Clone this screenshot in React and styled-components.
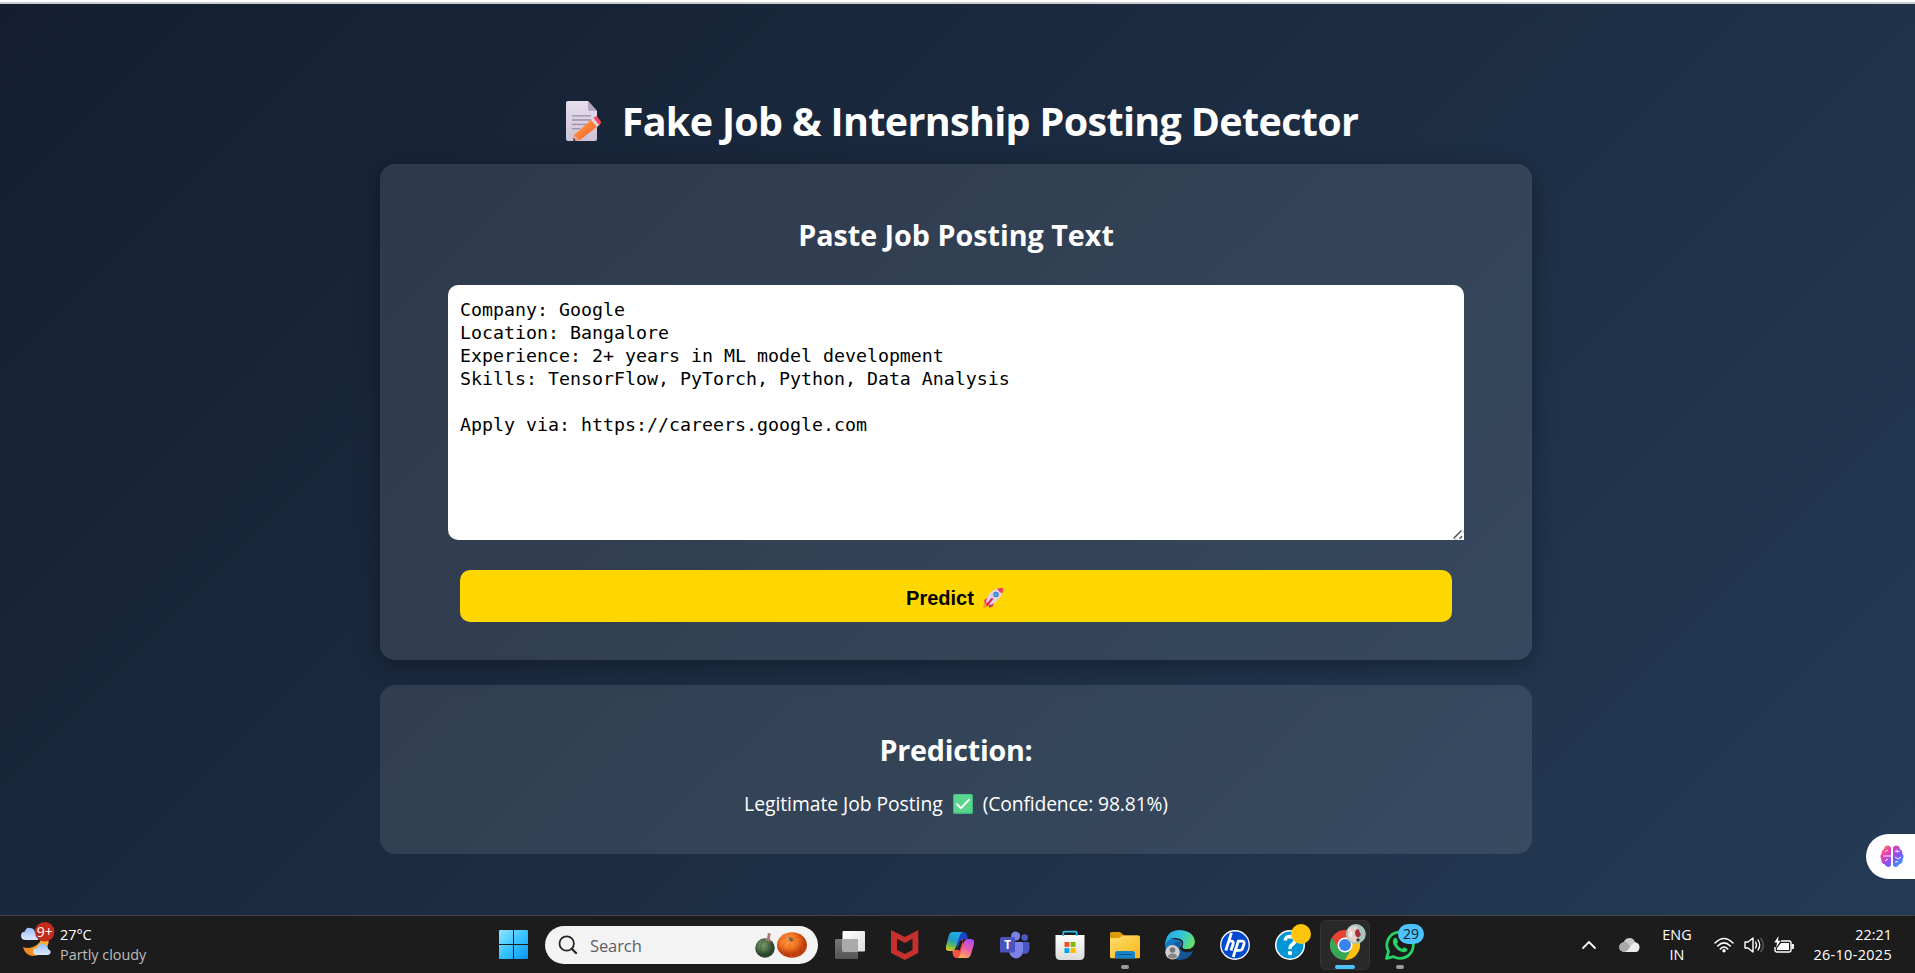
import React from "react";
import styled, { createGlobalStyle, css } from "styled-components";

const GlobalStyle = createGlobalStyle`
  *, *::before, *::after { box-sizing: border-box; }
  html, body { margin: 0; padding: 0; height: 100%; overflow: hidden; }
  body { font-family: "Segoe UI", "Open Sans", "Noto Sans", sans-serif; }
  svg { display: block; flex: none; }
`;

const Screen = styled.div`
  position: relative;
  display: flex;
  flex-direction: column;
  width: 1915px;
  height: 973px;
  overflow: hidden;
`;

const BrowserEdge = styled.div`
  height: 4px;
  flex: none;
  background: #ffffff;
  border-bottom: 2px solid #cbcbcb;
`;

const Page = styled.main`
  flex: 1;
  display: flex;
  flex-direction: column;
  align-items: center;
  padding: 90px 3px 0 0;
  color: #ffffff;
  background: linear-gradient(135deg, #141e30, #243b55);
`;

const Title = styled.h1`
  display: flex;
  align-items: center;
  gap: 20px;
  height: 54px;
  margin: 0 0 16px 12px;
  font-size: 39.5px;
  font-weight: 700;
  line-height: 54px;
  letter-spacing: ${(p) => p.$spacing}px;
  white-space: nowrap;
`;

const Card = styled.section`
  display: flex;
  flex-direction: column;
  align-items: center;
  width: 1152px;
  height: ${(p) => p.$height}px;
  padding-top: ${(p) => p.$top}px;
  border-radius: 15px;
  background: rgba(255, 255, 255, 0.1);
  ${(p) => p.$raised && css`
    margin-bottom: 25px;
    box-shadow: 0 5px 25px rgba(0, 0, 0, 0.3);
  `}
`;

const CardTitle = styled.h2`
  margin: 0;
  height: 40px;
  font-size: 28.7px;
  font-weight: 700;
  line-height: 40px;
  letter-spacing: ${(p) => p.$spacing}px;
  white-space: nowrap;
`;

const PostingField = styled.div`
  position: relative;
  width: 1016px;
  height: 255px;
  margin: 30px 0;
`;

const PostingInput = styled.textarea`
  display: block;
  width: 100%;
  height: 100%;
  padding: 13px 12px;
  border: 0;
  border-radius: 10px;
  outline: none;
  resize: none;
  color: #000000;
  background: #ffffff;
  font-family: Consolas, "DejaVu Sans Mono", monospace;
  font-size: 18.27px;
  line-height: 23px;
`;

const ResizeGrip = styled.svg`
  position: absolute;
  right: 0;
  bottom: 0;
`;

const PredictButton = styled.button`
  display: flex;
  align-items: center;
  justify-content: center;
  gap: 9px;
  width: 992px;
  height: 52px;
  padding: 3px 3px 0 0;
  border: 0;
  border-radius: 10px;
  color: #000000;
  background: #ffd700;
  font: 700 20px/24px "Liberation Sans", Arial, sans-serif;
`;

const Result = styled.p`
  display: flex;
  align-items: center;
  gap: 10px;
  height: 28px;
  margin: 20px 0 0;
  font-size: 19.3px;
  line-height: 28px;
  white-space: nowrap;
`;

const ResultText = styled.span`
  letter-spacing: ${(p) => p.$spacing}px;
`;

const Assistant = styled.div`
  position: absolute;
  top: 834px;
  right: 0;
  display: flex;
  align-items: center;
  width: 49px;
  height: 45px;
  padding-left: 14px;
  border-radius: 23px 0 0 23px;
  background: #ffffff;
`;

const Taskbar = styled.footer`
  display: flex;
  align-items: stretch;
  height: 58px;
  flex: none;
  border-top: 1px solid #454545;
  background: #1c1c1c;
  color: #ffffff;
  font-size: 14.4px;
  line-height: 20px;
`;

const Weather = styled.div`
  display: flex;
  gap: 5px;
  width: 486px;
  padding: 6px 0 0 20px;
`;

const Lines = styled.div`
  display: flex;
  flex-direction: column;
  width: ${(p) => p.$width || "auto"};
  padding-top: ${(p) => p.$top || 0}px;
  text-align: ${(p) => p.$align || "left"};
  white-space: nowrap;
`;

const Line = styled.span`
  letter-spacing: ${(p) => p.$spacing || 0}px;
  color: ${(p) => (p.$muted ? "#bdbdbd" : "#ffffff")};
`;

const AppSlot = styled.div`
  position: relative;
  display: flex;
  align-items: center;
  justify-content: center;
  width: 55px;
`;

const ActiveTile = styled.div`
  display: flex;
  align-items: center;
  justify-content: center;
  width: 50px;
  height: 50px;
  border: 1px solid #343434;
  border-radius: 6px;
  background: #292929;
`;

const Indicator = styled.i`
  position: absolute;
  bottom: 4px;
  left: 50%;
  width: ${(p) => (p.$active ? 20 : 8)}px;
  height: 4px;
  border-radius: 2px;
  transform: translateX(-50%);
  background: ${(p) => (p.$active ? "#4cc2ff" : "#9a9a9a")};
`;

const Badge = styled.span`
  position: absolute;
  top: 8px;
  left: ${(p) => p.$left}px;
  display: flex;
  align-items: center;
  justify-content: center;
  width: ${(p) => p.$width}px;
  height: 20px;
  border-radius: 10px;
  background: ${(p) => p.$color};
  color: #10202c;
  font-size: 14px;
  line-height: 20px;
`;

const SearchBox = styled.div`
  display: flex;
  align-items: center;
  width: 273px;
  height: 38px;
  margin: 10px 4.5px 0 4px;
  padding: 0 11px 0 13px;
  border-radius: 19px;
  background: #f3f3f3;
  color: #606060;
  font-size: 16.5px;
`;

const SearchLabel = styled.span`
  flex: 1;
  margin-left: 12px;
  padding-top: 1px;
  letter-spacing: -0.1px;
`;

const Tray = styled.div`
  display: flex;
  align-items: center;
  margin-left: auto;
  padding-right: 23px;
`;

const TrayItem = styled.div`
  display: flex;
  justify-content: center;
  width: ${(p) => p.$width}px;
  margin-left: ${(p) => p.$gap || 0}px;
`;

const MemoIcon = () => (
  <svg width="36" height="40" viewBox="0 0 36 40">
    <defs>
      <linearGradient id="paper" x1="0" y1="0" x2="0" y2="1"><stop stopColor="#e6dfec" /><stop offset="1" stopColor="#cdc2d6" /></linearGradient>
      <linearGradient id="pencil" x1="0" y1="0" x2="1" y2="1"><stop stopColor="#ffa544" /><stop offset="1" stopColor="#f4592f" /></linearGradient>
    </defs>
    <path d="M2 0H22L31 10V38Q31 40 29 40H2Q0 40 0 38V2Q0 0 2 0Z" fill="url(#paper)" />
    <path d="M22 0L31 10H23Q22 10 22 9Z" fill="#b5a7c0" />
    <path d="M6 14.8H25M6 19H25M6 23.4H22M6 27.7H14" stroke="#9b8ca8" strokeWidth="1.3" />
    <path d="M8 34L26 18L32 25L14 39L7 40Z" fill="url(#pencil)" />
    <path d="M8 34L14 39L7 40Z" fill="#e8a08a" /><path d="M7.5 37L10 39.4L7 40Z" fill="#583143" />
    <path d="M25 19L28 16.5L34 23.5L31 26Z" fill="#e8d4e0" />
    <path d="M27.5 17L29.5 15.5Q30.5 15 31.5 16L34.8 20.5Q35.5 21.7 34.5 22.7L33 24Z" fill="#f4475f" />
  </svg>
);

const RocketIcon = () => (
  <svg width="20" height="20" viewBox="0 0 20 20">
    <path d="M0 20Q0 14 4 15L6 17Q5 20 0 20Z" fill="#ff9f2e" />
    <path d="M6 9L1 12L2 16L6 14Z" fill="#f23d68" /><path d="M11 13L10 18L6 20L6 15Z" fill="#d72e62" />
    <path d="M3 14Q5 4 13 1Q17 0 20 0Q20 5 18 8Q13 15 7 17Z" fill="#dfd4e7" />
    <path d="M14 .8Q18-.2 20 0Q20.2 3 19.2 5.5Q16 4 14 .8Z" fill="#f33b55" />
    <circle cx="13" cy="6.4" r="2.7" fill="#576a93" /><circle cx="13" cy="6.4" r="1.9" fill="#3eaaf0" />
    <path d="M4 17L9 11" stroke="#d83062" strokeWidth="2.2" strokeLinecap="round" />
  </svg>
);

const CheckIcon = () => (
  <svg width="20" height="20" viewBox="0 0 20 20">
    <rect width="20" height="20" rx="1.5" fill="#42b878" /><rect x="1" y=".5" width="18" height="18" rx="1.5" fill="#5ad58d" />
    <path d="M4 10.3L8 14.2L16 5.6" fill="none" stroke="#fff" strokeWidth="1.9" strokeLinecap="round" strokeLinejoin="round" />
  </svg>
);

const BrainIcon = () => (
  <svg width="24" height="23" viewBox="0 0 24 23">
    <defs><linearGradient id="brain" x1="0" y1="0" x2="1" y2="1"><stop stopColor="#ff912e" /><stop offset=".28" stopColor="#f23da9" /><stop offset=".58" stopColor="#8650f4" /><stop offset="1" stopColor="#20b5ff" /></linearGradient></defs>
    <path d="M11 2.5Q9-.3 6 1Q4 2 4.2 4Q1.4 5 1.6 8.4Q-.5 11 1.2 14Q1 18.6 4.7 19.2Q6.3 23 9.5 21.8L11 20.5ZM13 2.5Q15-.3 18 1Q20 2 19.8 4Q22.6 5 22.4 8.4Q24.5 11 22.8 14Q23 18.6 19.3 19.2Q17.7 23 14.5 21.8L13 20.5Z" fill="url(#brain)" />
    <path d="M3 11H11M5 7L8 5M5 16L8 14M15 6L17 7V4.5M17 7L20 6M15 12L18 14L21 12M15 17L18 16.5" fill="none" stroke="#fff" strokeWidth=".9" />
  </svg>
);

const WeatherIcon = () => (
  <svg width="35" height="38" viewBox="0 0 35 38">
    <defs>
      <linearGradient id="cloud" x1="0" y1="0" x2="0" y2="1"><stop stopColor="#9abef7" /><stop offset="1" stopColor="#dce9ff" /></linearGradient>
      <linearGradient id="moon" x1="1" y1="0" x2="0" y2="1"><stop stopColor="#ffca28" /><stop offset="1" stopColor="#f07a1d" /></linearGradient>
    </defs>
    <path d="M6 18Q1 18 1 13.5Q1 10 5 9.5Q6 5 10 6Q14 6 15 10Q19 11 18 15V18Z" fill="url(#cloud)" />
    <path d="M23 10Q32 17 27 25Q22 34 12 34Q5 33 3 25Q7 27 13 25Q22 22 23 10Z" fill="url(#moon)" />
    <path d="M17 33Q13 33 13 29.5Q13 26 17 26Q19 20 24 22Q28 23 28 27Q31 28 30.5 31Q30 33 27 33Z" fill="url(#cloud)" />
    <circle cx="24.7" cy="9.8" r="9.8" fill="#c42b1c" />
    <text x="24.8" y="15" textAnchor="middle" fontFamily="Open Sans" fontSize="14" fill="#fff">9+</text>
  </svg>
);

const StartIcon = () => (
  <svg width="29" height="29" viewBox="0 0 29 29">
    <defs><linearGradient id="win" x1="0" y1="0" x2="29" y2="29" gradientUnits="userSpaceOnUse"><stop stopColor="#91e5ff" /><stop offset=".5" stopColor="#38c3ff" /><stop offset="1" stopColor="#0795f8" /></linearGradient></defs>
    <path d="M1 0H14V14H0V1Q0 0 1 0ZM15 0H28Q29 0 29 1V14H15ZM0 15H14V29H1Q0 29 0 28ZM15 15H29V28Q29 29 28 29H15Z" fill="url(#win)" />
  </svg>
);

const SearchIcon = () => (
  <svg width="20" height="20" viewBox="0 0 20 20">
    <circle cx="8.7" cy="8.5" r="7.2" fill="none" stroke="#262626" strokeWidth="1.8" />
    <path d="M13.8 13.8L18 18" stroke="#262626" strokeWidth="2.3" strokeLinecap="round" />
  </svg>
);

const PumpkinsIcon = () => (
  <svg width="52" height="27" viewBox="0 0 52 27">
    <defs>
      <radialGradient id="green" cx=".4" cy=".35"><stop stopColor="#7b9970" /><stop offset=".6" stopColor="#4e7247" /><stop offset="1" stopColor="#28432b" /></radialGradient>
      <radialGradient id="orange" cx=".4" cy=".35"><stop stopColor="#ffa34c" /><stop offset=".6" stopColor="#f17420" /><stop offset="1" stopColor="#bc3e0d" /></radialGradient>
    </defs>
    <ellipse cx="10" cy="16" rx="9.8" ry="9.7" fill="url(#green)" />
    <path d="M10 8Q2 14 8 25M12 8Q16 16 12 25M13 8Q20 14 16 24" fill="none" stroke="#34553a" strokeWidth=".5" />
    <path d="M10 9Q13 6 12.7 1L15.8 1.6Q14 7 16 10.5L12 9Z" fill="#a87868" />
    <ellipse cx="37" cy="13" rx="15" ry="12.7" fill="url(#orange)" />
    <path d="M35 8Q24 11 29 23M36 8Q33 15 37 25M37 8Q44 14 42 24M38 8Q49 9 48 19M34 7Q26 4 23 11M38 6Q45 3 50 10" fill="none" stroke="#d85c1b" strokeWidth=".6" />
    <path d="M31 5.5Q35 4 38.5 7L37 10L34 8Z" fill="#8a5b38" /><path d="M31 5L34.5 6L33 8.5Z" fill="#cbb699" />
  </svg>
);

const TaskViewIcon = () => (
  <svg width="30" height="30" viewBox="0 0 30 30">
    <defs>
      <linearGradient id="tvFront" x1="0" y1="0" x2="1" y2="1"><stop stopColor="#fff" /><stop offset="1" stopColor="#dcdcdc" /></linearGradient>
      <linearGradient id="tvBack" x1="0" y1="0" x2="0" y2="1"><stop stopColor="#777" /><stop offset="1" stopColor="#555" /></linearGradient>
    </defs>
    <rect y="9" width="23" height="20" rx="1" fill="url(#tvBack)" /><rect x="7.5" y="1" width="22.5" height="20.5" rx="1" fill="url(#tvFront)" />
    <path d="M7.5 9H23V21.5H7.5Z" fill="#aaa" />
  </svg>
);

const McAfeeIcon = () => (
  <svg width="28" height="30" viewBox="0 0 28 30">
    <path d="M0 0L14 7L27.3 0V23L14 30L0 23Z" fill="#c5302c" /><path d="M6 8.8L14 13L21.5 8.8V20L14 24L6 20Z" fill="#1c1c1c" />
  </svg>
);

const CopilotIcon = () => (
  <svg width="28" height="26" viewBox="0 0 28 26">
    <defs>
      <linearGradient id="cpA" x1=".5" y1="0" x2=".2" y2="1"><stop stopColor="#20b1ed" /><stop offset=".4" stopColor="#2099c9" /><stop offset=".72" stopColor="#61bd54" /><stop offset="1" stopColor="#f3c521" /></linearGradient>
      <linearGradient id="cpB" x1=".7" y1="0" x2=".3" y2="1"><stop stopColor="#a84cf2" /><stop offset=".5" stopColor="#ed5caa" /><stop offset="1" stopColor="#ffae5b" /></linearGradient>
    </defs>
    <path d="M13 0H17Q20 0 21 3L22 7H19Q16 7 15 10L12 18L9 8Z" fill="#1745c8" />
    <path d="M15 26H11Q8 26 7 23L6 18H10Q12 18 13 15L16 6L19 17Z" fill="#ef5443" />
    <path d="M7 0H17Q15 0 14 3L10 15Q9 19 5 19H3Q-1 19 0 14L3 3Q4 0 7 0Z" fill="url(#cpA)" />
    <path d="M21 26H11Q13 26 14 23L18 10Q19 7 22 7H25Q29 7 28 12L25 22Q24 26 21 26Z" fill="url(#cpB)" />
    <path d="M15.7 8.5L12.4 18.2" stroke="#1c1c1c" strokeWidth="2.6" />
  </svg>
);

const TeamsIcon = () => (
  <svg width="30" height="28" viewBox="0 0 30 28">
    <circle cx="24.7" cy="6.5" r="3.2" fill="#5059c9" /><path d="M20 11H28Q29.5 11 29.5 12.5V18Q29 23 24 23Q21 23 20 19Z" fill="#4d55c2" />
    <circle cx="15.6" cy="5" r="4.5" fill="#7b83eb" /><path d="M9 11H21Q23 11 23 13V20Q22.5 27 16 27.5Q10 27 9 20Z" fill="#7b83eb" />
    <rect y="6" width="15" height="15.5" rx="1.5" fill="#4b53bc" />
    <text x="7.5" y="17.5" textAnchor="middle" fontFamily="Open Sans" fontWeight="700" fontSize="11.5" fill="#fff">T</text>
  </svg>
);

const StoreIcon = () => (
  <svg width="30" height="30" viewBox="0 0 30 30">
    <defs><linearGradient id="bag" x1="0" y1="0" x2="0" y2="1"><stop stopColor="#fff" /><stop offset="1" stopColor="#dadada" /></linearGradient></defs>
    <path d="M.5 5H29.5V25Q29.5 30 25 30H5Q.5 30 .5 25Z" fill="url(#bag)" />
    <path d="M8.3 6V2.8Q8.3 1.7 9.4 1.7H20.6Q21.7 1.7 21.7 2.8V6" fill="none" stroke="#31bcec" strokeWidth="1.7" />
    <path d="M9.5 12H14.4V16.9H9.5Z" fill="#f25022" /><path d="M15.6 12H20.5V16.9H15.6Z" fill="#7fba00" /><path d="M9.5 18.1H14.4V23H9.5Z" fill="#00a4ef" /><path d="M15.6 18.1H20.5V23H15.6Z" fill="#ffb900" />
  </svg>
);

const FolderIcon = () => (
  <svg width="30" height="28" viewBox="0 0 30 28">
    <defs><linearGradient id="folder" x1="0" y1="0" x2="1" y2="1"><stop stopColor="#ffdc70" /><stop offset="1" stopColor="#fab714" /></linearGradient></defs>
    <path d="M1.5 1H10L14 4.5H28V12H0V2.5Q0 1 1.5 1Z" fill="#dd9b08" /><path d="M0 7H9L13 4.5H28.5Q30 4.5 30 6V26Q30 27.3 28.7 27.3H1.3Q0 27.3 0 26Z" fill="url(#folder)" />
    <path d="M5 27.5V22.5Q5 20 7.5 20H22.5Q25 20 25 22.5V27.5Z" fill="#1682cc" /><path d="M8.5 23.5H21.5" stroke="#0c5593" strokeWidth="1.2" strokeLinecap="round" />
  </svg>
);

const EdgeIcon = () => (
  <svg width="30" height="30" viewBox="0 0 30 30">
    <defs>
      <linearGradient id="edgeA" x1="0" y1=".3" x2="1" y2=".6"><stop stopColor="#27a7e5" /><stop offset=".5" stopColor="#34c6db" /><stop offset="1" stopColor="#69df61" /></linearGradient>
      <linearGradient id="edgeB" x1="0" y1="0" x2="1" y2="1"><stop stopColor="#1387d4" /><stop offset="1" stopColor="#123f7b" /></linearGradient>
    </defs>
    <path d="M0 16Q0 7 9 9Q19 10 17 15Q12 19 18 22Q23 25 28 21Q24 30 14.5 30Q2 29 0 16Z" fill="url(#edgeB)" />
    <path d="M10 13Q6 22 16 29Q25 29 28 21Q20 24 16 20Q12 16 16 12Z" fill="#145594" />
    <path d="M0 15Q1 0 15 0Q29 1 30 12Q29 20 20 19Q16 18 18 15Q20 9 11 8Q3 7 0 15Z" fill="url(#edgeA)" />
    <circle cx="7.5" cy="22.3" r="7.2" fill="#cfcfcf" /><circle cx="7.5" cy="20" r="2.8" fill="#777" /><path d="M2.8 27Q3 23.5 7.5 23.5Q12 23.5 12.2 27Q7.5 30 2.8 27Z" fill="#888" />
  </svg>
);

const HpIcon = () => (
  <svg width="30" height="30" viewBox="0 0 30 30">
    <circle cx="15" cy="15" r="14.9" fill="#fff" /><circle cx="15" cy="15" r="13.6" fill="#0049cf" />
    <path d="M5.8 20.5L11.4 3M8 11.2H11.2Q14 11.2 13.1 14L11 20.5M13.2 27L18.3 11.2H22Q24.9 11.2 24 14.2L22.8 17.8Q22 20.4 19.2 20.4H16" fill="none" stroke="#fff" strokeWidth="2.8" />
  </svg>
);

const HelpIcon = () => (
  <svg width="30" height="30" viewBox="0 0 30 30">
    <circle cx="15" cy="15" r="15" fill="#fff" /><circle cx="15" cy="15" r="13.5" fill="#0096d6" />
    <path d="M10.2 10.5Q10.5 6.5 15 6.5Q20 6.8 19.8 10.6Q19.7 13 17 14.7Q15 16 15 19" fill="none" stroke="#fff" strokeWidth="3.4" /><circle cx="15" cy="23" r="2.2" fill="#fff" />
  </svg>
);

const ChromeMark = styled.svg`
  margin: -6px 0 0 6px;
`;

const ChromeIcon = () => (
  <ChromeMark width="36" height="36" viewBox="0 0 36 36">
    <g transform="translate(0 6)">
      <circle cx="15" cy="15" r="15" fill="#ea4335" />
      <path d="M2 7.5A15 15 0 0 0 15 30L21.5 18.7L8.5 18.7Z" fill="#34a853" />
      <path d="M15 30A15 15 0 0 0 28 7.5H15L21.5 18.7Z" fill="#fbc116" />
      <circle cx="15" cy="15" r="7.5" fill="#fff" /><circle cx="15" cy="15" r="6" fill="#3b82f0" />
    </g>
    <circle cx="25.8" cy="10" r="10" fill="#a8c6bc" /><path d="M18 5Q22 0 28 3L26 11L28 17Q22 20 18 14Z" fill="#e3d3cf" />
    <path d="M25 8Q26 4 29 6L30 9Q32 11 29 13Q25 14 25 8Z" fill="#a82e3b" /><path d="M28 14L30 16L28 18L26 16Z" fill="#4b362f" /><path d="M20 6L23 9L22 14L19 11Z" fill="#f8eaea" />
  </ChromeMark>
);

const WhatsAppIcon = () => (
  <svg width="30" height="30" viewBox="0 0 30 30">
    <path d="M1.5 28.5L3.5 21.5A13.2 13.2 0 1 1 8.5 26.6Z" fill="none" stroke="#25d366" strokeWidth="2.8" strokeLinejoin="round" />
    <path d="M9 8.5Q10.5 7 12 9L13 11.7Q13 12.5 11.8 14Q14 18 17 19L19 17.2L22.5 19Q22 22.7 18 22.2Q12 21 8.5 14.5Q7 11 9 8.5Z" fill="#25d366" />
  </svg>
);

const ChevronIcon = () => (
  <svg width="16" height="12" viewBox="0 0 16 12">
    <path d="M2 9L8 3L14 9" fill="none" stroke="#fff" strokeWidth="1.8" strokeLinecap="round" />
  </svg>
);

const CloudIcon = () => (
  <svg width="21" height="14" viewBox="0 0 21 14">
    <path d="M5 14Q0 13 .3 8.5Q.7 5 4.8 4Q6.5 0 10.5 0Q15 .2 16 4.2Q20.5 5 20.4 9.5Q20 14 15.7 14Z" fill="#c9c9c9" />
    <path d="M5 14Q9 13 11.5 8.3Q13 5 16 4.2Q20.5 5 20.4 9.5Q20 14 15.7 14Z" fill="#ededed" /><path d="M4.8 4Q8 3 11 8.7Q9 13 5 14Q0 13 .3 8.5Q.7 5 4.8 4Z" fill="#aaa" />
  </svg>
);

const WifiIcon = () => (
  <svg width="20" height="16" viewBox="0 0 20 16">
    <path d="M1 6Q10-3 19 6M3.7 9Q10 2.8 16.3 9M6.3 12Q10 8.2 13.7 12" fill="none" stroke="#fff" strokeWidth="1.5" strokeLinecap="round" /><circle cx="10" cy="13.8" r="1.7" fill="#fff" />
  </svg>
);

const VolumeIcon = () => (
  <svg width="21" height="18" viewBox="0 0 21 18">
    <path d="M1 6H4L9 2V16L4 12H1Z" fill="none" stroke="#fff" strokeWidth="1.4" strokeLinejoin="round" /><path d="M11.5 6Q13.5 9 11.5 12M14 4Q17.5 9 14 14" fill="none" stroke="#fff" strokeWidth="1.3" strokeLinecap="round" /><path d="M16.6 1.8Q22 9 16.6 16.2" fill="none" stroke="#606060" strokeWidth="1.3" />
  </svg>
);

const BatteryIcon = () => (
  <svg width="20" height="18" viewBox="0 0 20 18">
    <path d="M7 5H15Q17 5 17 7V14Q17 16 15 16H3Q1 16 1 14V11" fill="none" stroke="#fff" strokeWidth="1.4" /><path d="M7 7H15V14H3V12Z" fill="#fff" /><path d="M17.5 8H19Q20 8 20 9V12Q20 13 19 13H17.5Z" fill="#fff" /><path d="M4.5 0L.3 6.6H3L2.2 11.5L6.6 4.8H4Z" fill="#fff" />
  </svg>
);

const POSTING = `Company: Google
Location: Bangalore
Experience: 2+ years in ML model development
Skills: TensorFlow, PyTorch, Python, Data Analysis

Apply via: https://careers.google.com`;

const APPS = [
  { id: "taskview", Icon: TaskViewIcon },
  { id: "mcafee", Icon: McAfeeIcon },
  { id: "copilot", Icon: CopilotIcon },
  { id: "teams", Icon: TeamsIcon },
  { id: "store", Icon: StoreIcon },
  { id: "files", Icon: FolderIcon, running: true },
  { id: "edge", Icon: EdgeIcon },
  { id: "hp", Icon: HpIcon },
  { id: "help", Icon: HelpIcon, badge: { color: "#ffc40c", width: 20, left: 28.5 } },
];

export default function App() {
  return (
    <Screen>
      <GlobalStyle />
      <BrowserEdge />
      <Page>
        <Title $spacing={-0.67}><MemoIcon />Fake Job &amp; Internship Posting Detector</Title>
        <Card $height={496} $top={51} $raised>
          <CardTitle $spacing={0}>Paste Job Posting Text</CardTitle>
          <PostingField>
            <PostingInput defaultValue={POSTING} spellCheck={false} />
            <ResizeGrip width="12" height="12" viewBox="0 0 12 12">
              <path d="M12 4V12H4Z" fill="#ffffff" />
              <path d="M1.5 10.5L9.5 2.5M7.5 10.8L10 8.3" fill="none" stroke="#505050" strokeWidth="1.5" />
            </ResizeGrip>
          </PostingField>
          <PredictButton>Predict <RocketIcon /></PredictButton>
        </Card>
        <Card $height={169} $top={45}>
          <CardTitle $spacing={-0.25}>Prediction:</CardTitle>
          <Result>
            <ResultText $spacing={-0.03}>Legitimate Job Posting</ResultText>
            <CheckIcon />
            <ResultText $spacing={-0.14}>(Confidence: 98.81%)</ResultText>
          </Result>
        </Card>
      </Page>
      <Assistant><BrainIcon /></Assistant>
      <Taskbar>
        <Weather>
          <WeatherIcon />
          <Lines $top={3}><Line>27°C</Line><Line $muted>Partly cloudy</Line></Lines>
        </Weather>
        <AppSlot><StartIcon /></AppSlot>
        <SearchBox><SearchIcon /><SearchLabel>Search</SearchLabel><PumpkinsIcon /></SearchBox>
        {APPS.map(({ id, Icon, running, badge }) => (
          <AppSlot key={id}>
            <Icon />
            {running && <Indicator />}
            {badge && <Badge $color={badge.color} $width={badge.width} $left={badge.left} />}
          </AppSlot>
        ))}
        <AppSlot>
          <ActiveTile><ChromeIcon /></ActiveTile>
          <Indicator $active />
        </AppSlot>
        <AppSlot>
          <WhatsAppIcon />
          <Indicator />
          <Badge $color="#4cc2ff" $width={26} $left={25.5}>29</Badge>
        </AppSlot>
        <Tray>
          <TrayItem $width={16}><ChevronIcon /></TrayItem>
          <TrayItem $width={21} $gap={22}><CloudIcon /></TrayItem>
          <TrayItem $width={40} $gap={17}>
            <Lines $align="center"><Line>ENG</Line><Line>IN</Line></Lines>
          </TrayItem>
          <TrayItem $width={20} $gap={17}><WifiIcon /></TrayItem>
          <TrayItem $width={21} $gap={10}><VolumeIcon /></TrayItem>
          <TrayItem $width={20} $gap={9}><BatteryIcon /></TrayItem>
          <Lines $width="98px" $align="right"><Line>22:21</Line><Line $spacing={0.35}>26-10-2025</Line></Lines>
        </Tray>
      </Taskbar>
    </Screen>
  );
}
